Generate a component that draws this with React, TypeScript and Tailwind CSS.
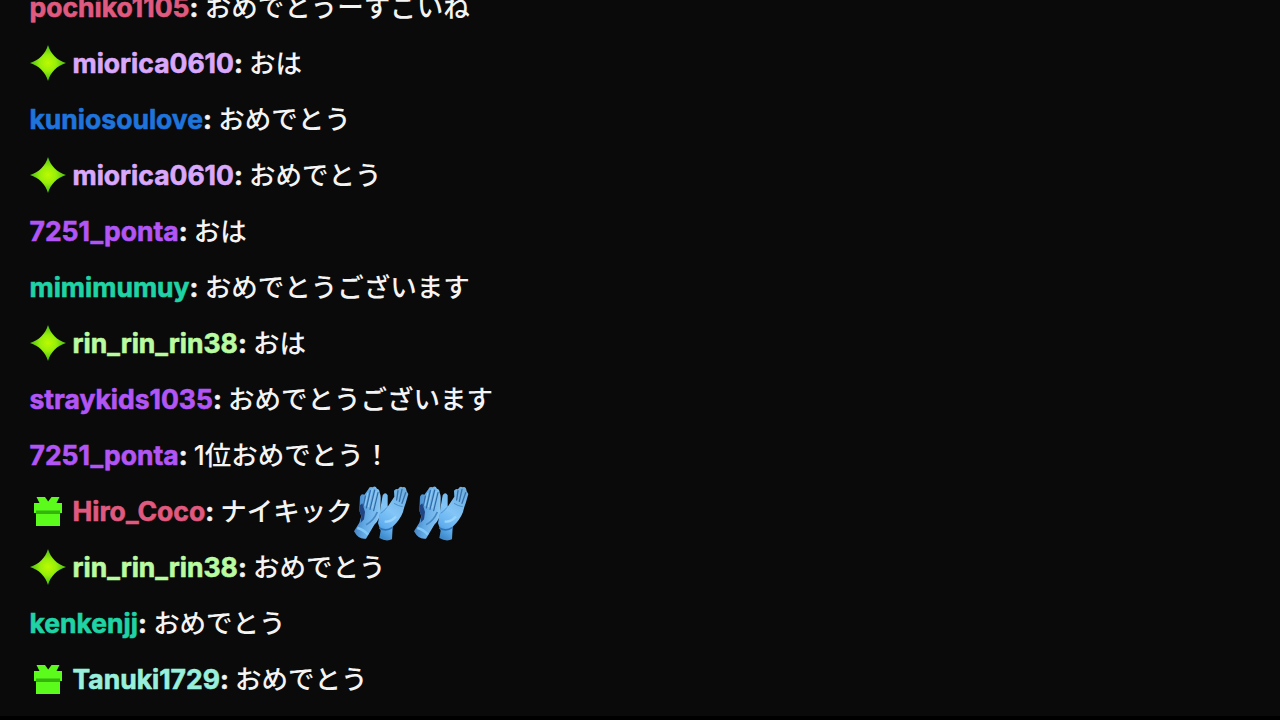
import React from 'react';

type BadgeKind = 'sparkle' | 'gift';

interface ChatMessage {
  id: number;
  user: string;
  color: string;
  badge?: BadgeKind;
  text: string;
  claps?: number;
}

const messages: ChatMessage[] = [
  { id: 1, user: 'pochiko1105', color: 'text-[#e05a80]', text: 'おめでとうーすごいね' },
  { id: 2, user: 'miorica0610', color: 'text-[#d9a8fb]', badge: 'sparkle', text: 'おは' },
  { id: 3, user: 'kuniosoulove', color: 'text-[#1f74dc]', text: 'おめでとう' },
  { id: 4, user: 'miorica0610', color: 'text-[#d9a8fb]', badge: 'sparkle', text: 'おめでとう' },
  { id: 5, user: '7251_ponta', color: 'text-[#b255f5]', text: 'おは' },
  { id: 6, user: 'mimimumuy', color: 'text-[#1fd3a5]', text: 'おめでとうございます' },
  { id: 7, user: 'rin_rin_rin38', color: 'text-[#b9fba0]', badge: 'sparkle', text: 'おは' },
  { id: 8, user: 'straykids1035', color: 'text-[#b255f5]', text: 'おめでとうございます' },
  { id: 9, user: '7251_ponta', color: 'text-[#b255f5]', text: '1位おめでとう！' },
  { id: 10, user: 'Hiro_Coco', color: 'text-[#e05a80]', badge: 'gift', text: 'ナイキック', claps: 2 },
  { id: 11, user: 'rin_rin_rin38', color: 'text-[#b9fba0]', badge: 'sparkle', text: 'おめでとう' },
  { id: 12, user: 'kenkenjj', color: 'text-[#1fd3a5]', text: 'おめでとう' },
  { id: 13, user: 'Tanuki1729', color: 'text-[#98f0dc]', badge: 'gift', text: 'おめでとう' },
];

const SparkleBadge: React.FC = () => (
  <svg viewBox="0 0 36 36" className="w-9 h-9 mr-[7px] mb-0.5 shrink-0">
    <defs>
      <radialGradient id="sparkle">
        <stop offset="0" stopColor="#bdfa00" />
        <stop offset="0.45" stopColor="#98ef0a" />
        <stop offset="1" stopColor="#45bb14" />
      </radialGradient>
    </defs>
    <path d="M18 0C20.6 8.8 27 15.3 36 18C27 20.7 20.6 27.2 18 36C15.4 27.2 9 20.7 0 18C9 15.3 15.4 8.8 18 0Z" fill="url(#sparkle)" />
  </svg>
);

const GiftBadge: React.FC = () => (
  <svg viewBox="0 -1 36 36" className="w-9 h-9 mr-[7px] mb-0.5 shrink-0">
    <path d="M6.5 3H15L18.2 7.5L21.5 3H29.5L26.5 9H32V19H30V32H6V19H4V9H9.5Z" fill="#5bfb1c" />
    <path d="M6 16.5H30V20H6Z" fill="#35b40e" />
  </svg>
);

const ClapEmote: React.FC = () => (
  <svg viewBox="42 28 168 168" className="w-14 h-14 ml-px mr-[3px] shrink-0 overflow-visible">
    <defs>
      <linearGradient id="clapLeft" x1="0" y1="0.3" x2="1" y2="0.5">
        <stop offset="0" stopColor="#3c78ba" />
        <stop offset="0.45" stopColor="#62a9e4" />
        <stop offset="1" stopColor="#8bc9f5" />
      </linearGradient>
      <linearGradient id="clapRight" x1="0.7" y1="0" x2="0.3" y2="1">
        <stop offset="0" stopColor="#6faee0" />
        <stop offset="0.5" stopColor="#82c5f6" />
        <stop offset="0.8" stopColor="#62aff0" />
        <stop offset="1" stopColor="#3e8acb" />
      </linearGradient>
    </defs>
    {/* left hand */}
    <path d="M58 144L64 124L58 108L60 66Q64 56 73 60L85 44Q88 34 98 38Q106 32 111 42Q119 44 119 54Q123 62 122 74L121 112Q119 136 103 150L78 192Q56 196 42 170Z" fill="url(#clapLeft)" />
    <path d="M60 92L67 86L75 112L72 134L62 144L64 124L58 108Z" fill="#214482" />
    <path d="M76 64L70 94M91 48L79 100M104 46L90 104M114 54L101 108" fill="none" stroke="#3069a8" strokeWidth="3.5" strokeLinecap="round" />
    <path d="M83 56L75 92M97 44L85 96M109 50L96 100" fill="none" stroke="#93c9ee" strokeWidth="3.5" strokeLinecap="round" />
    <path d="M112 112Q100 140 78 150" fill="none" stroke="#4587c4" strokeWidth="5" />
    <path d="M52 160Q70 164 84 180" fill="none" stroke="#83c9f8" strokeWidth="8" />
    {/* right hand */}
    <path d="M122 96L128 62Q136 50 143 62L143 96L151 84L163 66L162 48Q168 40 174 44Q179 32 188 38Q198 34 200 50L205 58L197 86Q192 98 189 112Q180 136 158 156L156 194Q138 202 118 190L122 168L114 146Z" fill="url(#clapRight)" />
    <path d="M174 48L170 76M186 44L178 80M197 54L186 86" fill="none" stroke="#3870aa" strokeWidth="4" strokeLinecap="round" />
    <path d="M141 98Q130 112 122 116M162 86Q174 94 188 96" fill="none" stroke="#4e91cb" strokeWidth="3" />
    <path d="M118 160Q138 172 158 158" fill="none" stroke="#2e75b8" strokeWidth="5" />
    <path d="M134 140Q150 144 168 126" fill="none" stroke="#98d4fd" strokeWidth="7" />
  </svg>
);

const MessageRow: React.FC<{ message: ChatMessage }> = ({ message }) => (
  <div className="flex items-center h-14 shrink-0 whitespace-pre">
    {message.badge === 'sparkle' && <SparkleBadge />}
    {message.badge === 'gift' && <GiftBadge />}
    <span className={`font-bold [-webkit-text-stroke:0.6px_currentColor] ${message.color}`}>{message.user}</span>
    <span className="font-bold [-webkit-text-stroke:0.6px_currentColor]">: </span>
    <span className="font-medium">{message.text}</span>
    {Array.from({ length: message.claps ?? 0 }, (_, i) => (
      <ClapEmote key={i} />
    ))}
  </div>
);

export default function App() {
  return (
    <div className="h-[720px] w-full overflow-hidden bg-[#0a0a0a] border-b-4 border-black text-[#f4f4f4] font-['Inter','Noto_Sans_CJK_JP',sans-serif] text-[26.5px]">
      <div className="flex flex-col pl-[29.5px] -mt-5">
        {messages.map((message) => (
          <MessageRow key={message.id} message={message} />
        ))}
      </div>
    </div>
  );
}
